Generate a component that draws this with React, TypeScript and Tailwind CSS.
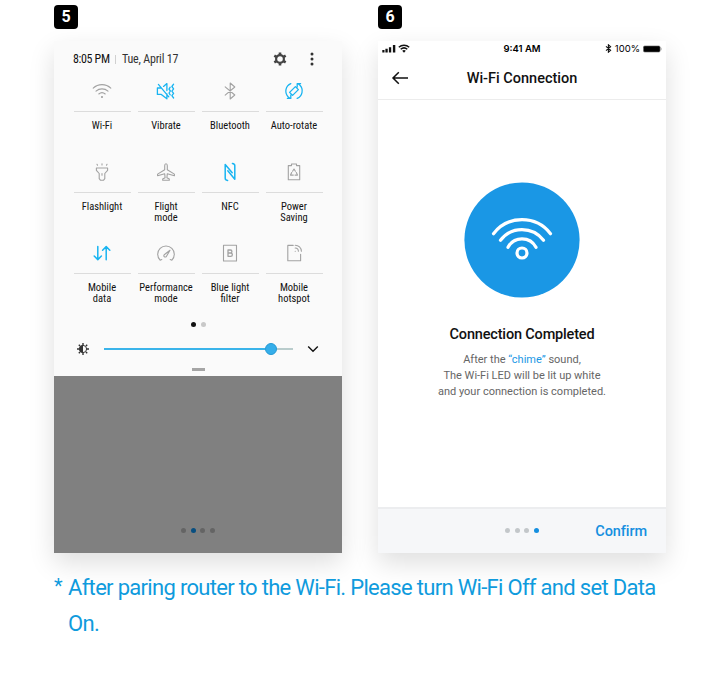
import React from "react";

const cond = "font-['Roboto_Condensed',Roboto,sans-serif] [font-stretch:75%]";

const Svg = ({ children, w = 20, className = "" }: { children: React.ReactNode; w?: number; className?: string }) => (
  <svg width={w} height={20} viewBox={`0 0 ${w} 20`} fill="none" stroke="currentColor" strokeWidth="1.1" strokeLinecap="round" strokeLinejoin="round" className={className}>
    {children}
  </svg>
);

const icons: Record<string, React.ReactNode> = {
  wifi: (
    <Svg>
      <path d="M1.2 7.1a12.8 12.8 0 0 1 17.6 0M4 10.2a8.9 8.9 0 0 1 12 0M6.8 13a4.9 4.9 0 0 1 6.4 0" />
      <circle cx="10" cy="16" r="0.5" fill="currentColor" />
    </Svg>
  ),
  vibrate: (
    <Svg>
      <path strokeWidth="1.3" d="M5.4 7H1.4v6.4h3.9l5.6 4.4v-5M7.5 5.4l3.4-2.8v7M2.4 3.4l10.4 12.4" />
      <path strokeWidth="1.3" d="M14.2 6.2l-1.2 1.9 1.4 1.9-1.4 2 1.2 1.9M17.6 3.2l-1.7 2.3 1.7 2.3-1.7 2.3 1.7 2.3-1.7 2.3 1.7 2.3" />
    </Svg>
  ),
  bluetooth: (
    <Svg>
      <path d="M5.2 5.8l9.6 8.2L10.2 18V2l4.6 4-9.6 8.2" />
    </Svg>
  ),
  rotate: (
    <Svg>
      <path strokeWidth="1.3" d="M11.4 5.6l3 3-5.8 5.8-3-3zM6.8 2.6A8.2 8.2 0 0 0 4 15.7l1.9 1.5M6.8 17.4H3.4M6.8 17.2v-3.2M13.2 17.4A8.2 8.2 0 0 0 16 4.3l-1.9-1.5M13.2 2.6h3.4M13.2 2.8v3.2" />
    </Svg>
  ),
  flashlight: (
    <Svg>
      <path d="M4.4 6h11.2v2.3l-2.8 3.2v5.2l-1.2 1.5H8.4l-1.2-1.5v-5.2L4.4 8.3zM10 11.5v1.8M10 1.7v1.2M5 2.3l.5 1M15 2.3l-.5 1" />
    </Svg>
  ),
  flight: (
    <Svg>
      <path d="M10 1.7c.9 0 1.3 1 1.3 2v4l7.1 4.4v1.6l-7.1-2-.4 4 2.4 1.3v1.2H6.7V17l2.4-1.3-.4-4-7.1 2v-1.6l7.1-4.4v-4c0-1 .4-2 1.3-2z" />
    </Svg>
  ),
  nfc: (
    <Svg>
      <path strokeWidth="1.5" d="M7.6 18.4c-1.6-.2-2.4-.9-2.4-2.2V2.6l7 8.2M12.4 1.4c1.6.2 2.4.9 2.4 2.2v13.6l-7-8.4" />
    </Svg>
  ),
  power: (
    <Svg>
      <path d="M4.3 3.6h3.2V2h5v1.6h3.2v14.2H4.3z" />
      <path d="M8.6 9.2L10 7l1.4 2.2M12.3 10.5l1.2 2.6H11M9.3 13.1H6.5l1.2-2.6" />
    </Svg>
  ),
  data: (
    <Svg>
      <path strokeWidth="1.5" d="M5.8 3.4v13M2.2 13l3.6 3.6L9.4 13M14.2 16.8v-13M10.6 7.2l3.6-3.6 3.6 3.6" />
    </Svg>
  ),
  performance: (
    <Svg>
      <path d="M5.8 16.6l-1.7.6a8.3 8.3 0 1 1 11.8 0l-1.7-.6M14 7.3l-5.8 4.4c-1 1.4.4 3 2 2z" />
    </Svg>
  ),
  filter: (
    <Svg>
      <path d="M3.5 2.2h13v15.8h-13z" />
      <path strokeWidth="1.3" d="M8 7h2.4a1.5 1.5 0 0 1 0 3H8zM8 10h2.7a1.6 1.6 0 0 1 0 3.3H8z" />
    </Svg>
  ),
  hotspot: (
    <Svg>
      <path d="M9.2 2.4H3.8v15.4h12.8v-6.6M11.2 8.2h.1M11.2 5a3.3 3.3 0 0 1 3.2 3.2M11.2 2.2a6.2 6.2 0 0 1 6.2 6" />
    </Svg>
  ),
};

const tiles: { icon: string; label: string; on?: boolean }[] = [
  { icon: "wifi", label: "Wi-Fi" },
  { icon: "vibrate", label: "Vibrate", on: true },
  { icon: "bluetooth", label: "Bluetooth" },
  { icon: "rotate", label: "Auto-rotate", on: true },
  { icon: "flashlight", label: "Flashlight" },
  { icon: "flight", label: "Flight\nmode" },
  { icon: "nfc", label: "NFC", on: true },
  { icon: "power", label: "Power\nSaving" },
  { icon: "data", label: "Mobile\ndata", on: true },
  { icon: "performance", label: "Performance\nmode" },
  { icon: "filter", label: "Blue light\nfilter" },
  { icon: "hotspot", label: "Mobile\nhotspot" },
];

const Badge = ({ n }: { n: number }) => (
  <div className="flex h-6 w-6 items-center justify-center rounded-[4px] bg-black text-[16px] font-bold leading-none text-white">{n}</div>
);

const QuickPanel = () => (
  <div className={`flex h-[512px] w-[288px] flex-col bg-[#fafafa] shadow-[0_10px_24px_rgba(0,0,0,0.13)] ${cond}`}>
    <div className="flex h-[35px] items-center pl-[19px] pr-[28px] pt-px text-[12px] leading-none text-[#111]">
      <span className="w-[37px] whitespace-nowrap font-[450] tracking-[-0.35px]">8:05 PM</span>
      <span className="ml-[5px] h-[9px] w-px bg-[#d0d0d0]" />
      <span className="ml-[6px] whitespace-nowrap tracking-[-0.2px] text-[#333]">Tue, April 17</span>
      <svg width="14" height="16" viewBox="0 0 14 16" className="ml-auto" fill="none" stroke="#444" strokeLinejoin="round">
        <circle cx="7" cy="8" r="3.9" strokeWidth="2.2" />
        <path strokeWidth="2.6" strokeLinecap="butt" d="M7 1.4v2.4M7 12.2v2.4M1.3 4.7l2.1 1.2M10.6 10.1l2.1 1.2M1.3 11.3l2.1-1.2M10.6 5.9l2.1-1.2" />
      </svg>
      <svg width="4" height="14" viewBox="0 0 4 14" className="ml-[23px]" fill="#333">
        <circle cx="2" cy="2" r="1.5" />
        <circle cx="2" cy="7" r="1.5" />
        <circle cx="2" cy="12" r="1.5" />
      </svg>
    </div>
    <div className="grid h-[243px] grid-cols-4 grid-rows-3 gap-x-[7px] pl-5 pr-[19px]">
      {tiles.map((t) => (
        <div key={t.label} className="flex flex-col items-center pt-[5px]">
          <div className={t.on ? "pr-px text-[#18b4f1]" : "pr-px text-[#a2a2a2]"}>{icons[t.icon]}</div>
          <div className="mt-[10px] h-px w-full bg-[#dcdcdc]" />
          <div className="mt-2 whitespace-pre pr-px text-center text-[10.5px] leading-[11px] text-[#111]">{t.label}</div>
        </div>
      ))}
    </div>
    <div className="flex h-[10px] items-center justify-center gap-[5px]">
      <span className="h-[5px] w-[5px] rounded-full bg-[#111]" />
      <span className="h-[5px] w-[5px] rounded-full bg-[#c8c8c8]" />
    </div>
    <div className="flex h-[39px] items-center pl-[23px] pr-[23px] pt-px">
      <svg width="12" height="12" viewBox="0 0 12 12" fill="none" stroke="#333">
        <circle cx="6" cy="6" r="3.6" />
        <path fill="#333" stroke="none" d="M6 2.3a3.7 3.7 0 0 0 0 7.4z" />
        <path strokeWidth="1.4" d="M6 0v2M6 10v2M0 6h2M10 6h2M1.8 1.8l1.2 1.2M9 9l1.2 1.2M1.8 10.2l1.2-1.2M9 3l1.2-1.2" />
      </svg>
      <div className="ml-[15px] flex w-[189px] items-center">
        <div className="h-[2px] w-[161px] bg-[#3ab4ea]" />
        <div className="h-3 w-3 shrink-0 rounded-full border border-[#2499d4] bg-[#35aeea]" />
        <div className="h-[2px] flex-1 bg-[#b9cccc]" />
      </div>
      <svg width="12" height="8" viewBox="0 0 12 8" className="ml-auto" fill="none" stroke="#111" strokeWidth="1.4">
        <path d="M1.2 1.6L6 6.2l4.8-4.6" />
      </svg>
    </div>
    <div className="flex h-[8px] justify-center">
      <span className="h-[3px] w-[13px] bg-[#a5a5a5]" />
    </div>
    <div className="flex flex-1 items-end justify-center gap-[4.6px] bg-[#808080] pb-5">
      <span className="h-[5px] w-[5px] rounded-full bg-[#646464]" />
      <span className="h-[5px] w-[5px] rounded-full bg-[#074e80]" />
      <span className="h-[5px] w-[5px] rounded-full bg-[#646464]" />
      <span className="h-[5px] w-[5px] rounded-full bg-[#646464]" />
    </div>
  </div>
);

const ConnectionScreen = () => (
  <div className="flex h-[512px] w-[288px] flex-col bg-white shadow-[0_10px_24px_rgba(0,0,0,0.13)]">
    <div className="grid h-[15px] grid-cols-3 items-center pl-1 pr-[4px] font-[Inter,sans-serif] text-[9.5px] leading-none text-black">
      <div className="flex items-center gap-[2px]">
        <svg width="14" height="9" viewBox="0 0 14 9" fill="#111">
          <path d="M.3 6h2.2v2.5H.3zM3.4 4.8h2.3v3.7H3.4zM6.9 3.2h2.3v5.3H6.9zM10.9 1h2.4v7.5h-2.4z" />
        </svg>
        <svg width="12" height="9" viewBox="0 0 12 9" fill="none" stroke="#111" strokeWidth="1.5">
          <path d="M.8 3.2a7.8 7.8 0 0 1 10.4 0M2.7 5.3a5 5 0 0 1 6.6 0" />
          <path fill="#111" stroke="none" d="M4.2 6.8a2.8 2.8 0 0 1 3.6 0L6 8.7z" />
        </svg>
      </div>
      <span className="text-center font-semibold">9:41 AM</span>
      <div className="flex items-center justify-end">
        <svg width="7" height="9" viewBox="0 0 7 9" fill="none" stroke="#111" strokeWidth="1.1">
          <path d="M1 2.3l4.6 4L3.4 8.2V.8l2.2 1.9-4.6 4" />
        </svg>
        <span className="ml-[3px]">100%</span>
        <svg width="19" height="8" viewBox="0 0 19 8" className="ml-[3px]">
          <rect x=".4" y=".9" width="16.7" height="6.2" rx="1.4" fill="#000" stroke="#777" strokeWidth=".6" />
          <path d="M18 2.8v2.4" stroke="#999" />
        </svg>
      </div>
    </div>
    <div className="flex h-[44px] items-center justify-center border-b border-[#ececec] pt-[2px] text-[14.5px] font-medium text-[#111]">
      <svg width="18" height="14" viewBox="0 0 18 14" className="mb-px ml-[13px]" fill="none" stroke="#111" strokeWidth="1.5">
        <path d="M17 7H2M7.8 1.2L2 7l5.8 5.8" />
      </svg>
      <span className="flex-1 pr-[31px] text-center">Wi-Fi Connection</span>
    </div>
    <div className="flex flex-1 flex-col items-center pt-[82px]">
      <svg width="116" height="116" viewBox="0 0 116 116" fill="none" stroke="#fff" strokeWidth="3.2" strokeLinecap="round">
        <circle cx="58" cy="58" r="57.6" fill="#1a97e5" stroke="none" />
        <path d="M29.5 51.7a36 36 0 0 1 57 0M36.5 58.3a27 27 0 0 1 43 0M44 65.3a15.8 15.8 0 0 1 28 0" />
        <circle cx="58" cy="71" r="5" />
      </svg>
      <h2 className="mt-[27px] text-[14.5px] font-medium leading-5 tracking-[-0.17px] text-[#111]">Connection Completed</h2>
      <p className="mt-[7px] whitespace-nowrap text-center text-[11px] leading-4 text-[#666]">
        After the <span className="text-[#1a97e5]">“chime”</span> sound,
        <br />
        The Wi-Fi LED will be lit up white
        <br />
        and your connection is completed.
      </p>
    </div>
    <div className="grid h-[46px] grid-cols-[1fr_auto_1fr] items-center border-t-2 border-[#ecedef] bg-[#f6f7f9]">
      <div />
      <div className="flex gap-[4.6px] pb-px">
        <span className="h-[5px] w-[5px] rounded-full bg-[#c3c7ca]" />
        <span className="h-[5px] w-[5px] rounded-full bg-[#c3c7ca]" />
        <span className="h-[5px] w-[5px] rounded-full bg-[#c3c7ca]" />
        <span className="h-[5px] w-[5px] rounded-full bg-[#158fe0]" />
      </div>
      <span className="pr-[19px] pt-px text-right text-[14.5px] font-medium tracking-[-0.1px] text-[#158fe0]">Confirm</span>
    </div>
  </div>
);

export default function App() {
  return (
    <main className="h-[675px] w-[720px] overflow-hidden bg-white pl-[54px] pt-[5px] font-[Roboto,sans-serif]">
      <div className="flex gap-9">
        <section className="flex flex-col gap-3">
          <Badge n={5} />
          <QuickPanel />
        </section>
        <section className="flex flex-col gap-3">
          <Badge n={6} />
          <ConnectionScreen />
        </section>
      </div>
      <div className="mt-[17px] flex text-[22px] leading-9 tracking-[-0.69px] text-[#0f9bdd]">
        <span className="w-[14px] shrink-0 text-[20px] leading-[32px]">*</span>
        <p className="whitespace-nowrap">
          After paring router to the Wi-Fi. Please turn Wi-Fi Off and set Data
          <br />
          On.
        </p>
      </div>
    </main>
  );
}
